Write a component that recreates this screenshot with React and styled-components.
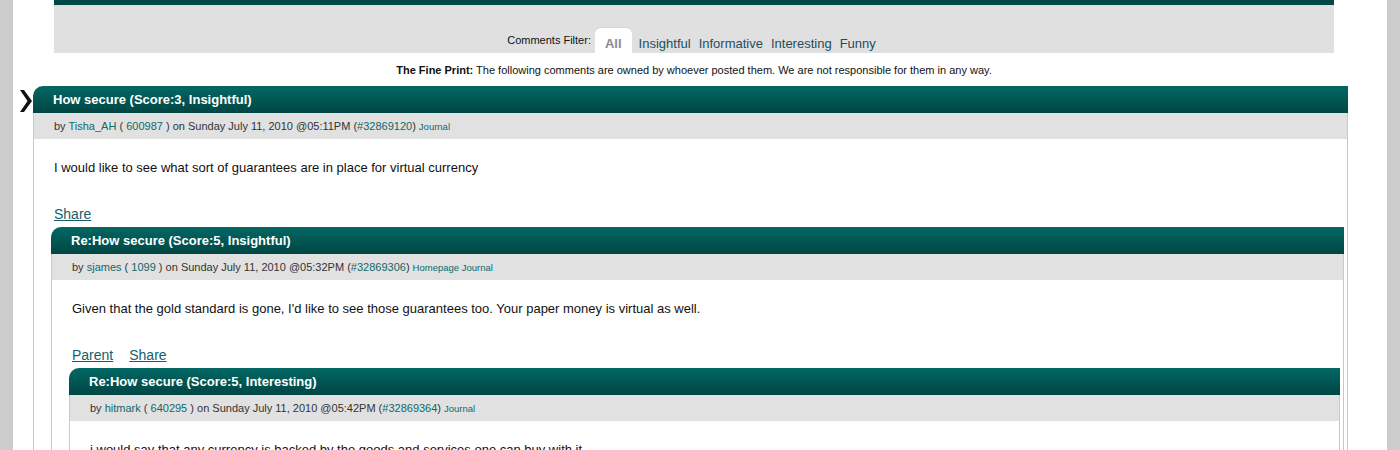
import React from "react";
import styled, { createGlobalStyle } from "styled-components";

const GlobalStyle = createGlobalStyle`
  html, body {
    margin: 0;
    padding: 0;
    background: #cccccc;
    font-family: "Liberation Sans", Arial, sans-serif;
  }
`;

const Page = styled.div`
  margin: 0 13px;
  background: #ffffff;
  min-height: 450px;
  overflow: hidden;
`;

const Top = styled.div`
  margin: 0 53px 0 41px;
`;

const TopBar = styled.div`
  height: 5px;
  background: #004848;
`;

const FilterBand = styled.div`
  height: 48px;
  background: #e0e0e0;
  display: flex;
  justify-content: center;
  align-items: flex-end;
`;

const FilterLabel = styled.span`
  font-size: 11px;
  color: #111;
  margin-right: 4px;
  line-height: 25px;
`;

const Tab = styled.a`
  display: block;
  height: 25px;
  line-height: 31px;
  padding: 0 ${(p) => (p.$active ? "10px" : "3px")};
  margin-right: ${(p) => (p.$active ? "4px" : "2px")};
  font-size: 13px;
  font-weight: ${(p) => (p.$active ? "bold" : "normal")};
  color: ${(p) => (p.$active ? "#8a8a8a" : "#1b4f5e")};
  background: ${(p) => (p.$active ? "#ffffff" : "transparent")};
  border-radius: 6px 6px 0 0;
  box-shadow: ${(p) => (p.$active ? "0 -1px 0 #d6d6d6" : "none")};
  cursor: pointer;
`;

const FinePrint = styled.div`
  margin-top: 10px;
  text-align: center;
  font-size: 11px;
  line-height: 14px;
  color: #111;

  b {
    font-weight: bold;
  }
`;

const Thread = styled.div`
  position: relative;
  margin: 9px 39px 0 20px;
`;

const Marker = styled.svg`
  position: absolute;
  left: -15px;
  top: 3px;
  width: 15px;
  height: 24px;
`;

const Comment = styled.div`
  margin: ${(p) => (p.$nested ? "4px 3px 0 17px" : "0")};
`;

const Header = styled.div`
  height: 27px;
  line-height: 27px;
  padding-left: 20px;
  border-top-left-radius: 10px;
  background: linear-gradient(to bottom, #036864 0%, #004644 100%);
  color: #ffffff;
  font-size: 13px;
  font-weight: bold;
  white-space: nowrap;
  overflow: hidden;
`;

const Content = styled.div`
  border-left: 1px solid #c8c8c8;
  border-right: 1px solid #c8c8c8;
  min-height: 40px;
`;

const Meta = styled.div`
  height: 26px;
  line-height: 26px;
  padding-left: 20px;
  background: #e1e1e1;
  font-size: 11px;
  color: #333333;
  white-space: nowrap;
`;

const MetaLink = styled.a`
  color: #106868;
  text-decoration: none;
`;

const Small = styled.a`
  font-size: 9.5px;
  color: #106868;
  text-decoration: none;
  margin-left: 3px;
`;

const Body = styled.div`
  padding: 21px 20px 0 20px;
`;

const Text = styled.p`
  margin: 0;
  font-size: 13px;
  line-height: 16px;
  color: #111111;
`;

const Links = styled.div`
  margin-top: 29px;
  padding-left: 20px;
  display: flex;
  gap: 16px;
  line-height: 18px;
`;

const ActionLink = styled.a`
  font-size: 14px;
  color: #165f6b;
  text-decoration: underline;
  cursor: pointer;
`;

const comments = {
  title: "How secure (Score:3, Insightful)",
  user: "Tisha_AH",
  uid: "600987",
  date: "Sunday July 11, 2010 @05:11PM",
  cid: "#32869120",
  extras: ["Journal"],
  text: "I would like to see what sort of guarantees are in place for virtual currency",
  links: ["Share"],
  replies: [
    {
      title: "Re:How secure (Score:5, Insightful)",
      user: "sjames",
      uid: "1099",
      date: "Sunday July 11, 2010 @05:32PM",
      cid: "#32869306",
      extras: ["Homepage", "Journal"],
      text: "Given that the gold standard is gone, I'd like to see those guarantees too. Your paper money is virtual as well.",
      links: ["Parent", "Share"],
      replies: [
        {
          title: "Re:How secure (Score:5, Interesting)",
          user: "hitmark",
          uid: "640295",
          date: "Sunday July 11, 2010 @05:42PM",
          cid: "#32869364",
          extras: ["Journal"],
          text: "i would say that any currency is backed by the goods and services one can buy with it.",
          links: ["Parent", "Share"],
          replies: [],
        },
      ],
    },
  ],
};

const CommentItem = ({ c, nested }) => (
  <Comment $nested={nested}>
    <Header>{c.title}</Header>
    <Content>
      <Meta>
        by <MetaLink>{c.user}</MetaLink> ( <MetaLink>{c.uid}</MetaLink> ) on{" "}
        {c.date} (<MetaLink>{c.cid}</MetaLink>)
        <Small>{c.extras.join(" ")}</Small>
      </Meta>
      <Body>
        <Text>{c.text}</Text>
      </Body>
      <Links>
        {c.links.map((l) => (
          <ActionLink key={l}>{l}</ActionLink>
        ))}
      </Links>
      {c.replies.map((r) => (
        <CommentItem key={r.cid} c={r} nested />
      ))}
    </Content>
  </Comment>
);

const filters = ["Insightful", "Informative", "Interesting", "Funny"];

export default function App() {
  return (
    <>
      <GlobalStyle />
      <Page>
        <Top>
          <TopBar />
          <FilterBand>
            <FilterLabel>Comments Filter:</FilterLabel>
            <Tab $active>All</Tab>
            {filters.map((f) => (
              <Tab key={f}>{f}</Tab>
            ))}
          </FilterBand>
          <FinePrint>
            <b>The Fine Print:</b> The following comments are owned by whoever
            posted them. We are not responsible for them in any way.
          </FinePrint>
        </Top>
        <Thread>
          <Marker viewBox="0 0 15 24">
            <path d="M2 1 L6 1 L14 12 L6 23 L2 23 L9.5 12 Z" fill="#111" />
          </Marker>
          <CommentItem c={comments} />
        </Thread>
      </Page>
    </>
  );
}
